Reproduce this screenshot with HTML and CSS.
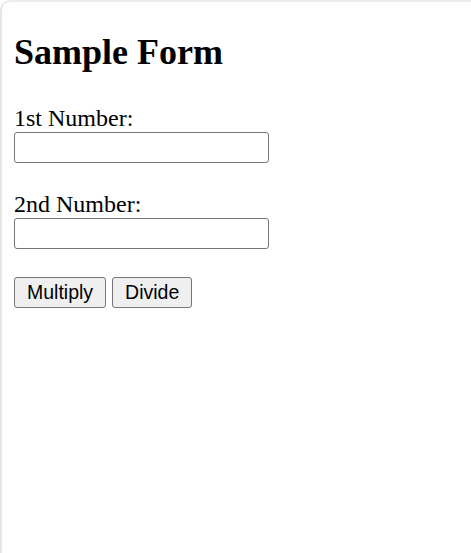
FILE: index.html
```html
<!DOCTYPE html>
<html>
<head>
<meta charset="utf-8">
<title>Sample Form</title>
<link rel="stylesheet" href="styles.css">
</head>
<body>
<div class="frame">
  <h1 class="title">Sample Form</h1>
  <form class="form">
    <div class="field">
      <label class="label" for="n1">1st Number:</label>
      <input class="input" id="n1" type="text">
    </div>
    <div class="field">
      <label class="label" for="n2">2nd Number:</label>
      <input class="input" id="n2" type="text">
    </div>
    <div class="actions">
      <button type="button" class="btn">Multiply</button>
      <button type="button" class="btn">Divide</button>
    </div>
  </form>
</div>
</body>
</html>
```
FILE: styles.css
```css
html, body {
  margin: 0;
  padding: 0;
  background: #ffffff;
}
body {
  font-family: "Liberation Serif", "Times New Roman", serif;
  color: #000;
}
.frame {
  box-sizing: border-box;
  min-height: 100vh;
  border-top: 2px solid #ececec;
  border-left: 2px solid #e6e6e6;
  border-top-left-radius: 10px;
  padding: 30px 12px 0 12px;
}
.title {
  margin: 0;
  font-size: 36px;
  font-weight: bold;
  line-height: 41px;
}
.form {
  display: flex;
  flex-direction: column;
  align-items: flex-start;
  margin-top: 31px;
}
.field {
  display: flex;
  flex-direction: column;
  align-items: flex-start;
  margin-bottom: 27px;
}
.field + .field {
  margin-bottom: 28px;
}
.label {
  font-size: 24px;
  line-height: 28px;
  height: 28px;
}
.input {
  box-sizing: border-box;
  width: 255px;
  height: 31px;
  margin: 0;
  border: 1px solid #767676;
  border-radius: 3px;
  background: #fff;
  padding: 2px 4px;
}
.actions {
  display: flex;
  gap: 6px;
}
.btn {
  box-sizing: border-box;
  height: 31px;
  margin: 0;
  padding: 0 12px;
  font-family: "Liberation Sans", Arial, sans-serif;
  font-size: 19.5px;
  color: #000;
  background: #efefef;
  border: 1px solid #767676;
  border-radius: 3px;
}
```
